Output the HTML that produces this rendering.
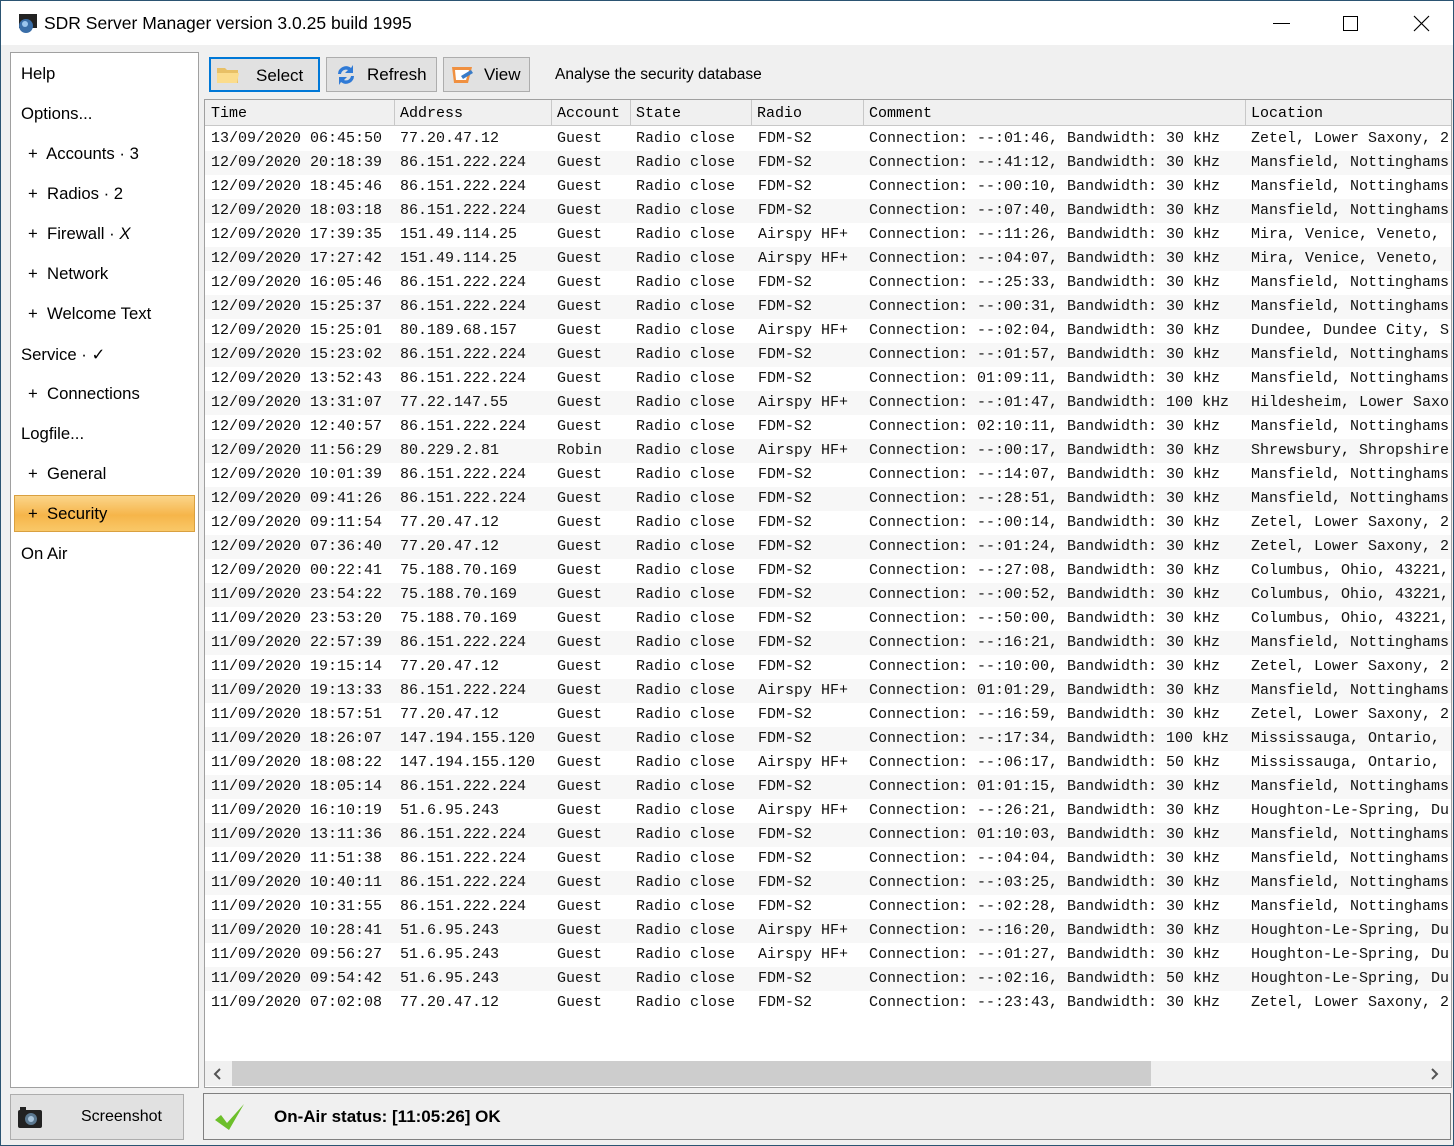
<!DOCTYPE html>
<html><head><meta charset="utf-8"><style>
*{margin:0;padding:0;box-sizing:border-box}
body{width:1454px;height:1146px;background:#f0f0f0;font-family:"Liberation Sans",sans-serif;position:relative;overflow:hidden;border:1px solid #2b5472}
.abs{position:absolute}
#title{left:0;top:0;width:1452px;height:44px;background:#fff}
#title .t{left:43px;top:12px;font-size:17.5px;color:#000}
#left{left:9px;top:51px;width:189px;height:1036px;background:#fff;border:1px solid #a0a0a0}
.m{position:absolute;left:10px;font-size:16.7px;color:#000}
.s{left:17px}
.btn{position:absolute;top:56px;height:35px;background:#e1e1e1;border:1px solid #adadad;font-size:17px}
.btn span{position:absolute;top:7px}
#tbl{left:203px;top:98px;width:1248px;height:989px;background:#fff;border:1px solid #a0a0a0;overflow:hidden}
#hdr{position:absolute;left:0;top:0;width:1246px;height:26px;background:#f0f0f0;border-bottom:1px solid #c8c8c8;font-family:"Liberation Mono",monospace;font-size:15px}
#hdr span{position:absolute;top:5px}
#hdr i{position:absolute;top:0;width:1px;height:26px;background:#c8c8c8}
.r{position:absolute;left:0;width:1246px;height:24px;font-family:"Liberation Mono",monospace;font-size:15px;color:#111;white-space:pre}
.r:nth-child(even){background:#f7f7f7}
.r span{position:absolute;top:3px}
.a{left:6px}.b{left:195px}.c{left:352px}.d{left:431px}.e{left:553px}.f{left:664px}.g{left:1046px}
#sb{left:204px;top:1060px;width:1246px;height:25px;background:#f0f0f0}
</style></head><body>
<div id="title" class="abs">
<svg class="abs" style="left:16px;top:12px" width="22" height="22" viewBox="0 0 22 22"><rect x="2" y="1" width="18" height="14" fill="#222"/><circle cx="9" cy="13" r="7" fill="#3a6ea8"/><circle cx="8" cy="11" r="3" fill="#9cc6ee"/></svg>
<div class="abs t">SDR Server Manager version 3.0.25 build 1995</div>
<div class="abs" style="left:1272px;top:22px;width:17px;height:1px;background:#000"></div>
<div class="abs" style="left:1342px;top:15px;width:15px;height:15px;border:1px solid #000"></div>
<svg class="abs" style="left:1412px;top:14px" width="17" height="17"><path d="M1 1L16 16M16 1L1 16" stroke="#000" stroke-width="1.2"/></svg>
</div>
<div id="left" class="abs">
<div class="m" style="top:11px">Help</div>
<div class="m" style="top:51px">Options...</div>
<div class="m s" style="top:91px">+&nbsp; Accounts · 3</div>
<div class="m s" style="top:131px">+&nbsp; Radios · 2</div>
<div class="m s" style="top:171px">+&nbsp; Firewall · <i>X</i></div>
<div class="m s" style="top:211px">+&nbsp; Network</div>
<div class="m s" style="top:251px">+&nbsp; Welcome Text</div>
<div class="m" style="top:291px">Service · ✓</div>
<div class="m s" style="top:331px">+&nbsp; Connections</div>
<div class="m" style="top:371px">Logfile...</div>
<div class="m s" style="top:411px">+&nbsp; General</div>
<div class="abs" style="left:3px;top:442px;width:181px;height:37px;background:linear-gradient(#fbd58a,#f6b54a 55%,#f9c868);border:1px solid #d9a040"></div>
<div class="m s" style="top:451px">+&nbsp; Security</div>
<div class="m" style="top:491px">On Air</div>
</div>
<div class="btn" style="left:208px;width:111px;border:2px solid #0078d7"><svg class="abs" style="left:5px;top:6px" width="24" height="20"><path d="M1 3h8l2 2h11v13H1z" fill="#e8c066"/><path d="M1 8h22l-2 10H1z" fill="#fbdc8c"/></svg><span style="left:45px">Select</span></div>
<div class="btn" style="left:325px;width:111px"><svg class="abs" style="left:8px;top:5px" width="22" height="24"><path d="M3 11a8 8 0 0 1 13-6l2-3v8h-8l3-3a5 5 0 0 0-7 4z" fill="#2f7ad6"/><path d="M19 13a8 8 0 0 1-13 6l-2 3v-8h8l-3 3a5 5 0 0 0 7-4z" fill="#2f7ad6"/></svg><span style="left:40px">Refresh</span></div>
<div class="btn" style="left:442px;width:87px"><svg class="abs" style="left:7px;top:8px" width="24" height="18"><path d="M1 1h20l-4 16H3z" fill="#f09040"/><path d="M4 4h14l-3 10H5z" fill="#fff"/><path d="M10 10l10-6 2 3-10 6z" fill="#3a7cc8"/></svg><span style="left:40px">View</span></div>
<div class="abs" style="left:554px;top:65px;font-size:15.5px">Analyse the security database</div>
<div id="tbl" class="abs">
<div id="hdr"><span style="left:6px">Time</span><i style="left:189px"></i><span style="left:195px">Address</span><i style="left:346px"></i><span style="left:352px">Account</span><i style="left:425px"></i><span style="left:431px">State</span><i style="left:546px"></i><span style="left:552px">Radio</span><i style="left:658px"></i><span style="left:664px">Comment</span><i style="left:1040px"></i><span style="left:1046px">Location</span></div>
<div style="position:absolute;left:0;top:27px">
<div class="r" style="top:0"><span class="a">13/09/2020 06:45:50</span><span class="b">77.20.47.12</span><span class="c">Guest</span><span class="d">Radio close</span><span class="e">FDM-S2</span><span class="f">Connection: --:01:46, Bandwidth: 30 kHz</span><span class="g">Zetel, Lower Saxony, 2</span></div>
<div class="r" style="top:24px"><span class="a">12/09/2020 20:18:39</span><span class="b">86.151.222.224</span><span class="c">Guest</span><span class="d">Radio close</span><span class="e">FDM-S2</span><span class="f">Connection: --:41:12, Bandwidth: 30 kHz</span><span class="g">Mansfield, Nottinghams</span></div>
<div class="r" style="top:48px"><span class="a">12/09/2020 18:45:46</span><span class="b">86.151.222.224</span><span class="c">Guest</span><span class="d">Radio close</span><span class="e">FDM-S2</span><span class="f">Connection: --:00:10, Bandwidth: 30 kHz</span><span class="g">Mansfield, Nottinghams</span></div>
<div class="r" style="top:72px"><span class="a">12/09/2020 18:03:18</span><span class="b">86.151.222.224</span><span class="c">Guest</span><span class="d">Radio close</span><span class="e">FDM-S2</span><span class="f">Connection: --:07:40, Bandwidth: 30 kHz</span><span class="g">Mansfield, Nottinghams</span></div>
<div class="r" style="top:96px"><span class="a">12/09/2020 17:39:35</span><span class="b">151.49.114.25</span><span class="c">Guest</span><span class="d">Radio close</span><span class="e">Airspy HF+</span><span class="f">Connection: --:11:26, Bandwidth: 30 kHz</span><span class="g">Mira, Venice, Veneto,</span></div>
<div class="r" style="top:120px"><span class="a">12/09/2020 17:27:42</span><span class="b">151.49.114.25</span><span class="c">Guest</span><span class="d">Radio close</span><span class="e">Airspy HF+</span><span class="f">Connection: --:04:07, Bandwidth: 30 kHz</span><span class="g">Mira, Venice, Veneto,</span></div>
<div class="r" style="top:144px"><span class="a">12/09/2020 16:05:46</span><span class="b">86.151.222.224</span><span class="c">Guest</span><span class="d">Radio close</span><span class="e">FDM-S2</span><span class="f">Connection: --:25:33, Bandwidth: 30 kHz</span><span class="g">Mansfield, Nottinghams</span></div>
<div class="r" style="top:168px"><span class="a">12/09/2020 15:25:37</span><span class="b">86.151.222.224</span><span class="c">Guest</span><span class="d">Radio close</span><span class="e">FDM-S2</span><span class="f">Connection: --:00:31, Bandwidth: 30 kHz</span><span class="g">Mansfield, Nottinghams</span></div>
<div class="r" style="top:192px"><span class="a">12/09/2020 15:25:01</span><span class="b">80.189.68.157</span><span class="c">Guest</span><span class="d">Radio close</span><span class="e">Airspy HF+</span><span class="f">Connection: --:02:04, Bandwidth: 30 kHz</span><span class="g">Dundee, Dundee City, S</span></div>
<div class="r" style="top:216px"><span class="a">12/09/2020 15:23:02</span><span class="b">86.151.222.224</span><span class="c">Guest</span><span class="d">Radio close</span><span class="e">FDM-S2</span><span class="f">Connection: --:01:57, Bandwidth: 30 kHz</span><span class="g">Mansfield, Nottinghams</span></div>
<div class="r" style="top:240px"><span class="a">12/09/2020 13:52:43</span><span class="b">86.151.222.224</span><span class="c">Guest</span><span class="d">Radio close</span><span class="e">FDM-S2</span><span class="f">Connection: 01:09:11, Bandwidth: 30 kHz</span><span class="g">Mansfield, Nottinghams</span></div>
<div class="r" style="top:264px"><span class="a">12/09/2020 13:31:07</span><span class="b">77.22.147.55</span><span class="c">Guest</span><span class="d">Radio close</span><span class="e">Airspy HF+</span><span class="f">Connection: --:01:47, Bandwidth: 100 kHz</span><span class="g">Hildesheim, Lower Saxo</span></div>
<div class="r" style="top:288px"><span class="a">12/09/2020 12:40:57</span><span class="b">86.151.222.224</span><span class="c">Guest</span><span class="d">Radio close</span><span class="e">FDM-S2</span><span class="f">Connection: 02:10:11, Bandwidth: 30 kHz</span><span class="g">Mansfield, Nottinghams</span></div>
<div class="r" style="top:312px"><span class="a">12/09/2020 11:56:29</span><span class="b">80.229.2.81</span><span class="c">Robin</span><span class="d">Radio close</span><span class="e">Airspy HF+</span><span class="f">Connection: --:00:17, Bandwidth: 30 kHz</span><span class="g">Shrewsbury, Shropshire</span></div>
<div class="r" style="top:336px"><span class="a">12/09/2020 10:01:39</span><span class="b">86.151.222.224</span><span class="c">Guest</span><span class="d">Radio close</span><span class="e">FDM-S2</span><span class="f">Connection: --:14:07, Bandwidth: 30 kHz</span><span class="g">Mansfield, Nottinghams</span></div>
<div class="r" style="top:360px"><span class="a">12/09/2020 09:41:26</span><span class="b">86.151.222.224</span><span class="c">Guest</span><span class="d">Radio close</span><span class="e">FDM-S2</span><span class="f">Connection: --:28:51, Bandwidth: 30 kHz</span><span class="g">Mansfield, Nottinghams</span></div>
<div class="r" style="top:384px"><span class="a">12/09/2020 09:11:54</span><span class="b">77.20.47.12</span><span class="c">Guest</span><span class="d">Radio close</span><span class="e">FDM-S2</span><span class="f">Connection: --:00:14, Bandwidth: 30 kHz</span><span class="g">Zetel, Lower Saxony, 2</span></div>
<div class="r" style="top:408px"><span class="a">12/09/2020 07:36:40</span><span class="b">77.20.47.12</span><span class="c">Guest</span><span class="d">Radio close</span><span class="e">FDM-S2</span><span class="f">Connection: --:01:24, Bandwidth: 30 kHz</span><span class="g">Zetel, Lower Saxony, 2</span></div>
<div class="r" style="top:432px"><span class="a">12/09/2020 00:22:41</span><span class="b">75.188.70.169</span><span class="c">Guest</span><span class="d">Radio close</span><span class="e">FDM-S2</span><span class="f">Connection: --:27:08, Bandwidth: 30 kHz</span><span class="g">Columbus, Ohio, 43221,</span></div>
<div class="r" style="top:456px"><span class="a">11/09/2020 23:54:22</span><span class="b">75.188.70.169</span><span class="c">Guest</span><span class="d">Radio close</span><span class="e">FDM-S2</span><span class="f">Connection: --:00:52, Bandwidth: 30 kHz</span><span class="g">Columbus, Ohio, 43221,</span></div>
<div class="r" style="top:480px"><span class="a">11/09/2020 23:53:20</span><span class="b">75.188.70.169</span><span class="c">Guest</span><span class="d">Radio close</span><span class="e">FDM-S2</span><span class="f">Connection: --:50:00, Bandwidth: 30 kHz</span><span class="g">Columbus, Ohio, 43221,</span></div>
<div class="r" style="top:504px"><span class="a">11/09/2020 22:57:39</span><span class="b">86.151.222.224</span><span class="c">Guest</span><span class="d">Radio close</span><span class="e">FDM-S2</span><span class="f">Connection: --:16:21, Bandwidth: 30 kHz</span><span class="g">Mansfield, Nottinghams</span></div>
<div class="r" style="top:528px"><span class="a">11/09/2020 19:15:14</span><span class="b">77.20.47.12</span><span class="c">Guest</span><span class="d">Radio close</span><span class="e">FDM-S2</span><span class="f">Connection: --:10:00, Bandwidth: 30 kHz</span><span class="g">Zetel, Lower Saxony, 2</span></div>
<div class="r" style="top:552px"><span class="a">11/09/2020 19:13:33</span><span class="b">86.151.222.224</span><span class="c">Guest</span><span class="d">Radio close</span><span class="e">Airspy HF+</span><span class="f">Connection: 01:01:29, Bandwidth: 30 kHz</span><span class="g">Mansfield, Nottinghams</span></div>
<div class="r" style="top:576px"><span class="a">11/09/2020 18:57:51</span><span class="b">77.20.47.12</span><span class="c">Guest</span><span class="d">Radio close</span><span class="e">FDM-S2</span><span class="f">Connection: --:16:59, Bandwidth: 30 kHz</span><span class="g">Zetel, Lower Saxony, 2</span></div>
<div class="r" style="top:600px"><span class="a">11/09/2020 18:26:07</span><span class="b">147.194.155.120</span><span class="c">Guest</span><span class="d">Radio close</span><span class="e">FDM-S2</span><span class="f">Connection: --:17:34, Bandwidth: 100 kHz</span><span class="g">Mississauga, Ontario,</span></div>
<div class="r" style="top:624px"><span class="a">11/09/2020 18:08:22</span><span class="b">147.194.155.120</span><span class="c">Guest</span><span class="d">Radio close</span><span class="e">Airspy HF+</span><span class="f">Connection: --:06:17, Bandwidth: 50 kHz</span><span class="g">Mississauga, Ontario,</span></div>
<div class="r" style="top:648px"><span class="a">11/09/2020 18:05:14</span><span class="b">86.151.222.224</span><span class="c">Guest</span><span class="d">Radio close</span><span class="e">FDM-S2</span><span class="f">Connection: 01:01:15, Bandwidth: 30 kHz</span><span class="g">Mansfield, Nottinghams</span></div>
<div class="r" style="top:672px"><span class="a">11/09/2020 16:10:19</span><span class="b">51.6.95.243</span><span class="c">Guest</span><span class="d">Radio close</span><span class="e">Airspy HF+</span><span class="f">Connection: --:26:21, Bandwidth: 30 kHz</span><span class="g">Houghton-Le-Spring, Du</span></div>
<div class="r" style="top:696px"><span class="a">11/09/2020 13:11:36</span><span class="b">86.151.222.224</span><span class="c">Guest</span><span class="d">Radio close</span><span class="e">FDM-S2</span><span class="f">Connection: 01:10:03, Bandwidth: 30 kHz</span><span class="g">Mansfield, Nottinghams</span></div>
<div class="r" style="top:720px"><span class="a">11/09/2020 11:51:38</span><span class="b">86.151.222.224</span><span class="c">Guest</span><span class="d">Radio close</span><span class="e">FDM-S2</span><span class="f">Connection: --:04:04, Bandwidth: 30 kHz</span><span class="g">Mansfield, Nottinghams</span></div>
<div class="r" style="top:744px"><span class="a">11/09/2020 10:40:11</span><span class="b">86.151.222.224</span><span class="c">Guest</span><span class="d">Radio close</span><span class="e">FDM-S2</span><span class="f">Connection: --:03:25, Bandwidth: 30 kHz</span><span class="g">Mansfield, Nottinghams</span></div>
<div class="r" style="top:768px"><span class="a">11/09/2020 10:31:55</span><span class="b">86.151.222.224</span><span class="c">Guest</span><span class="d">Radio close</span><span class="e">FDM-S2</span><span class="f">Connection: --:02:28, Bandwidth: 30 kHz</span><span class="g">Mansfield, Nottinghams</span></div>
<div class="r" style="top:792px"><span class="a">11/09/2020 10:28:41</span><span class="b">51.6.95.243</span><span class="c">Guest</span><span class="d">Radio close</span><span class="e">Airspy HF+</span><span class="f">Connection: --:16:20, Bandwidth: 30 kHz</span><span class="g">Houghton-Le-Spring, Du</span></div>
<div class="r" style="top:816px"><span class="a">11/09/2020 09:56:27</span><span class="b">51.6.95.243</span><span class="c">Guest</span><span class="d">Radio close</span><span class="e">Airspy HF+</span><span class="f">Connection: --:01:27, Bandwidth: 30 kHz</span><span class="g">Houghton-Le-Spring, Du</span></div>
<div class="r" style="top:840px"><span class="a">11/09/2020 09:54:42</span><span class="b">51.6.95.243</span><span class="c">Guest</span><span class="d">Radio close</span><span class="e">FDM-S2</span><span class="f">Connection: --:02:16, Bandwidth: 50 kHz</span><span class="g">Houghton-Le-Spring, Du</span></div>
<div class="r" style="top:864px"><span class="a">11/09/2020 07:02:08</span><span class="b">77.20.47.12</span><span class="c">Guest</span><span class="d">Radio close</span><span class="e">FDM-S2</span><span class="f">Connection: --:23:43, Bandwidth: 30 kHz</span><span class="g">Zetel, Lower Saxony, 2</span></div>
</div>
</div>
<div id="sb" class="abs">
<div class="abs" style="left:27px;top:0;width:919px;height:25px;background:#cdcdcd"></div>
<svg class="abs" style="left:8px;top:7px" width="8" height="12"><path d="M7 1L2 6l5 5" stroke="#555" stroke-width="2" fill="none"/></svg>
<svg class="abs" style="left:1226px;top:7px" width="8" height="12"><path d="M1 1l5 5-5 5" stroke="#555" stroke-width="2" fill="none"/></svg>
</div>
<div class="abs" style="left:9px;top:1093px;width:174px;height:46px;background:#e1e1e1;border:1px solid #adadad">
<svg class="abs" style="left:6px;top:11px" width="26" height="24"><rect x="1" y="4" width="24" height="18" rx="2" fill="#222"/><rect x="3" y="1" width="6" height="4" fill="#222"/><circle cx="14" cy="13" r="6" fill="#5b7890"/><circle cx="14" cy="13" r="3" fill="#a8c4dc"/></svg>
<div class="abs" style="left:70px;top:13px;font-size:16px">Screenshot</div>
</div>
<div class="abs" style="left:202px;top:1092px;width:1248px;height:47px;border:1px solid #808080">
<svg class="abs" style="left:9px;top:8px" width="34" height="30"><path d="M2 18l6-5 6 8L31 2l-15 26z" fill="#6cbf2a"/></svg>
<div class="abs" style="left:70px;top:14px;font-size:16.5px;font-weight:bold;transform:scaleX(1.03);transform-origin:left">On-Air status: [11:05:26] OK</div>
</div>
</body></html>
